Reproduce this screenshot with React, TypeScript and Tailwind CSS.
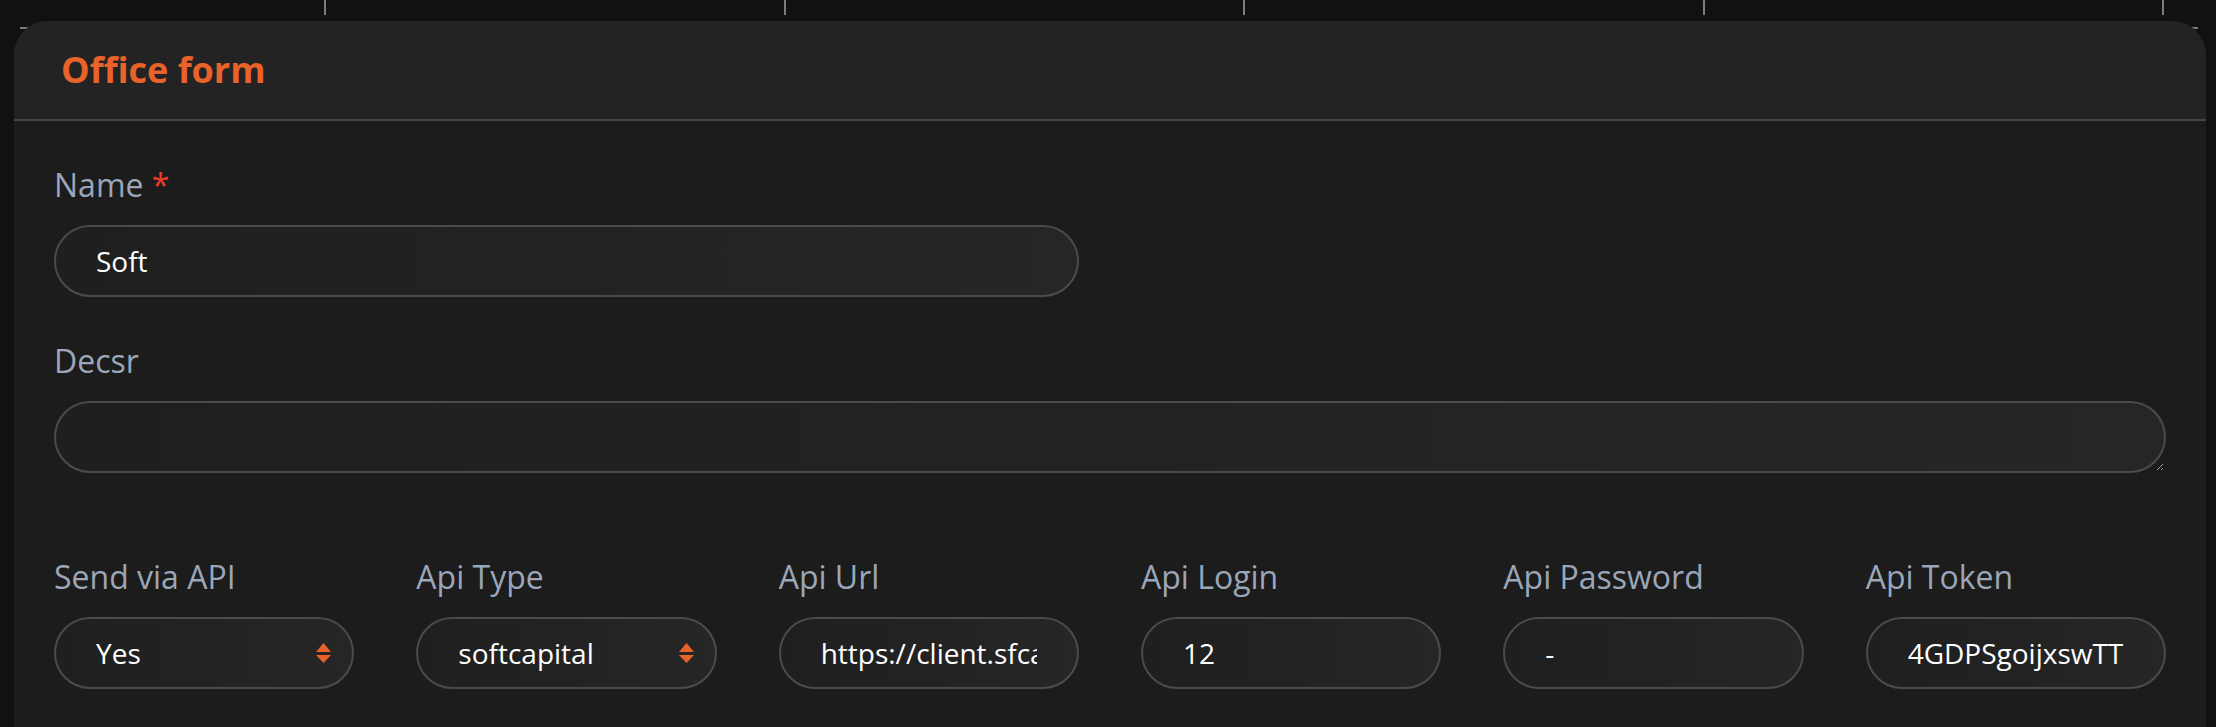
import React from "react";

const inputCls =
  "block w-full h-[72px] rounded-full border-2 border-[#4b4b4b] bg-linear-to-r from-[#1f1f1f] to-[#262626] pl-[40px] pr-[40px] text-[28px] text-white outline-none";

function Label({ children, required }: { children: React.ReactNode; required?: boolean }) {
  return (
    <div className="text-[32px] leading-[48px] text-[#9ba6b8] whitespace-nowrap">
      {children}
      {required && <span className="text-[#ee3b26]"> *</span>}
    </div>
  );
}

function TextField({ label, value, required }: { label: string; value: string; required?: boolean }) {
  return (
    <div className="flex flex-col gap-[16px] min-w-0">
      <Label required={required}>{label}</Label>
      <input className={inputCls} defaultValue={value} readOnly />
    </div>
  );
}

function Arrows() {
  return (
    <svg width="15" height="20" viewBox="0 0 15 20" className="shrink-0">
      <polygon points="0,9 7.5,0 15,9" fill="#e8622a" />
      <polygon points="0,12 15,12 7.5,20" fill="#e8622a" />
    </svg>
  );
}

function SelectField({ label, value }: { label: string; value: string }) {
  return (
    <div className="flex flex-col gap-[16px] min-w-0">
      <Label>{label}</Label>
      <div className="flex h-[72px] items-center justify-between rounded-full border-2 border-[#4b4b4b] bg-linear-to-r from-[#1f1f1f] to-[#262626] pl-[40px] pr-[21px] text-[28px] text-white">
        <span>{value}</span>
        <Arrows />
      </div>
    </div>
  );
}

export default function App() {
  return (
    <div className="relative h-[727px] overflow-hidden bg-[#111111] font-['Open_Sans',sans-serif]">
      <div className="flex h-[21px] gap-[457.5px] pl-[324px]">
        {[0, 1, 2, 3, 4].map((i) => (
          <div key={i} className="h-[15px] w-[2px] bg-[#7d7d7d]" />
        ))}
      </div>
      <div className="absolute left-[20px] right-[18px] top-[27px] h-[2px] bg-[#7a7a7a]" />
      <div className="relative z-10 ml-[14px] mr-[10px] overflow-hidden rounded-t-[34px] bg-[#1c1c1c]">
        <div className="flex h-[100px] items-center border-b-2 border-[#454545] bg-[#232323] pl-[47px]">
          <h2 className="text-[36px] font-bold text-[#e8622a]">Office form</h2>
        </div>
        <div className="grid grid-cols-6 gap-x-[62px] gap-y-[40px] px-[40px] pt-[40px] pb-[40px]">
          <div className="col-span-3">
            <TextField label="Name" value="Soft" required />
          </div>
          <div className="col-span-3" />
          <div className="col-span-6 flex flex-col gap-[16px]">
            <Label>Decsr</Label>
            <textarea
              className="block h-[72px] w-full rounded-full border-2 border-[#4b4b4b] bg-linear-to-r from-[#1f1f1f] to-[#262626] px-[40px] text-[28px] text-white outline-none [color-scheme:dark]"
              defaultValue=""
            />
          </div>
          <div className="col-span-6 mt-[40px] grid grid-cols-6 gap-x-[62px]">
            <SelectField label="Send via API" value="Yes" />
            <SelectField label="Api Type" value="softcapital" />
            <TextField label="Api Url" value="https://client.sfcapital.ru/api" />
            <TextField label="Api Login" value="12" />
            <TextField label="Api Password" value="-" />
            <TextField label="Api Token" value="4GDPSgoijxswTTc8bQ2kLm" />
          </div>
        </div>
      </div>
    </div>
  );
}
